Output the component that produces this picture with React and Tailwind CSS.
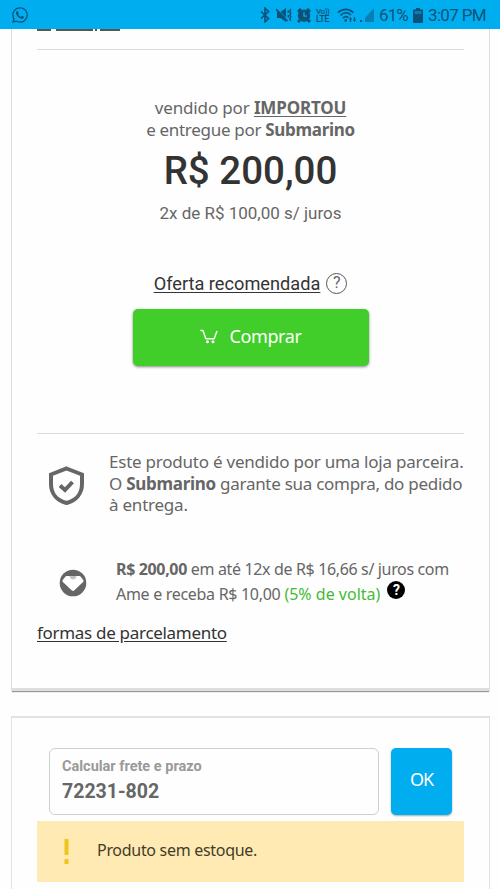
import React from "react";
import { FaWhatsapp } from "react-icons/fa";

function StatusBar() {
  return (
    <header className="flex h-[29px] shrink-0 items-center justify-between bg-[#00adef] pl-[11px] pr-[14px] text-[#0b5279]">
      <FaWhatsapp className="h-[18px] w-[18px]" />
      <div className="flex items-center pt-[1px]">
        <svg className="mr-[6px] h-[16px] w-[10px]" viewBox="0 0 10 16" fill="none" stroke="currentColor" strokeWidth="1.7">
          <path d="m1 4.500 7.500 7L5 14.800V1.200l3.500 3.300-7.500 7" />
        </svg>
        <svg className="mr-[5px] h-[14px] w-[16px]" viewBox="0 0 16 14">
          <path d="M1 4h3.500L10 0v14L4.500 10H1z" fill="currentColor" />
          <path d="M1 .5 11.500 11.500" stroke="#00adef" strokeWidth="1" />
          <path d="M0 1 11.500 13" stroke="currentColor" strokeWidth="1.600" />
          <path d="M12.300 2.500v2.500M12.300 7v2.500M14.800 1l-1 2 1 2-1 2 1 2-1 2 1 2" fill="none" stroke="currentColor" strokeWidth="1.500" />
        </svg>
        <svg className="mr-[5px] h-[15px] w-[14px]" viewBox="0 0 14 15">
          <path d="M1 4 4 1M13 4l-3-3M3 12l-2 2M11 12l2 2" stroke="currentColor" strokeWidth="3" />
          <circle cx="7" cy="7.700" r="6.200" fill="currentColor" />
          <path d="M7 4.300v3.800h3" fill="none" stroke="#00adef" strokeWidth="1.300" />
        </svg>
        <div className="mr-[6px] flex w-[15px] flex-col gap-[1px] font-['Roboto',sans-serif] font-medium leading-[7px]">
          <span className="h-[7px] whitespace-nowrap text-[8px] tracking-[-0.4px]">Vo))</span>
          <span className="h-[7px] whitespace-nowrap text-[9px] tracking-[-0.5px]">LTE</span>
        </div>
        <svg className="mr-[3px] h-[15px] w-[20px]" viewBox="0 0 20 15" fill="none" stroke="currentColor" strokeWidth="1.700">
          <path d="M1 4.700C5.500 .2 12 .2 16.500 4.700M3.500 7.400c3.200-3.200 7.500-3.200 10.500-.4M6 10c2-1.800 3.800-1.800 5.400-.4" />
          <circle cx="8.700" cy="12.400" r="1.300" fill="currentColor" stroke="none" />
          <path d="M13.500 14v-3M17.500 9v3" strokeWidth="1.200" />
          <path d="m11.800 11.500 1.700-2.500 1.700 2.500zM15.800 11.500l1.700 2.500 1.700-2.500z" fill="currentColor" stroke="none" />
        </svg>
        <svg className="mr-[5px] h-[14px] w-[14px]" viewBox="0 0 14 14">
          <path d="M14 0v14H5V10z" fill="#087fb2" />
          <path d="M0 12h2v2H0z" fill="currentColor" />
        </svg>
        <span className="mr-[6px] w-[28px] whitespace-nowrap font-['Roboto',sans-serif] text-[17px] leading-[20px] tracking-[-0.9px]">61%</span>
        <svg className="mr-[5px] h-[15px] w-[10px]" viewBox="0 0 10 15">
          <path d="M3 0h4v1.500h2q1 0 1 1V14q0 1-1 1H1q-1 0-1-1V2.500q0-1 1-1h2z" fill="currentColor" />
          <path d="M1.500 3h7v3h-7z" fill="#087fb2" />
        </svg>
        <span className="w-[58px] whitespace-nowrap font-['Roboto',sans-serif] text-[17px] leading-[20px] tracking-[-0.65px]">3:07 PM</span>
      </div>
    </header>
  );
}

function Cart() {
  return (
    <svg className="h-[16px] w-[18px]" viewBox="0 0 18 16" fill="none" stroke="white" strokeWidth="1.400" strokeLinecap="round" strokeLinejoin="round">
      <path d="M.8 2.500h2.200l2.800 8.200h8.400L16.800 3.500" />
      <circle cx="7.500" cy="13.700" r=".8" fill="white" />
      <circle cx="13" cy="13.700" r=".8" fill="white" />
    </svg>
  );
}

function Offer() {
  return (
    <section className="flex h-[662px] shrink-0 flex-col border-x border-b-[3px] border-[#dedede] px-[25px] shadow-[0_2px_1px_-1px_#999]">
      <div className="flex h-[2px] shrink-0">
        <span className="mr-[5px] h-[1.500px] w-[14px] bg-[#555]" />
        <span className="mr-[2px] h-[1.500px] w-[37px] bg-[#555]" />
        <span className="mr-[3px] h-[1.500px] w-[2px] bg-[#555]" />
        <span className="h-[1.500px] w-[20px] bg-[#555]" />
      </div>
      <hr className="mt-[18px] shrink-0 border-[#dcdcdc]" />
      <div className="mt-[47px] flex flex-col items-center whitespace-nowrap">
        <p className="h-[22px] text-[17px] leading-[22px] tracking-[-0.15px]">vendido por <b className="underline underline-offset-2">IMPORTOU</b></p>
        <p className="h-[22px] text-[17px] leading-[22px] tracking-[-0.3px]">e entregue por <b>Submarino</b></p>
        <p className="mt-[8px] h-[44px] font-['Roboto',sans-serif] text-[38.500px] font-medium leading-[44px] text-[#333]">R$ 200,00</p>
        <p className="mt-[9px] h-[22px] font-['Roboto',sans-serif] text-[17px] leading-[22px]">2x de R$ 100,00 s/ juros</p>
      </div>
      <div className="mt-[48px] flex h-[24px] shrink-0 items-center justify-center gap-[6px]">
        <a className="whitespace-nowrap font-['Roboto',sans-serif] text-[18.200px] leading-[24px] text-[#333] underline underline-offset-2">Oferta recomendada</a>
        <span className="mb-[2px] flex h-[21px] w-[21px] items-center justify-center rounded-full border border-[#555] font-['Roboto',sans-serif] text-[16px]">?</span>
      </div>
      <button className="mt-[13px] flex h-[57px] w-[236px] shrink-0 items-center justify-center gap-[12px] self-center rounded-[5px] bg-[#41cd2a] pb-[3px] text-[18px] text-white shadow-[0_1px_3px_#888]">
        <Cart />
        <span className="tracking-[-0.4px]">Comprar</span>
      </button>
      <hr className="mt-[67px] shrink-0 border-[#dcdcdc]" />
      <div className="mt-[17px] flex h-[66px] shrink-0 items-center">
        <svg className="ml-[12px] mr-[25px] mt-[2px] h-[39px] w-[35px] shrink-0" viewBox="0 0 35 39" fill="none" stroke="#666" strokeWidth="4">
          <path d="M17.500 2.500 33 8.500V18c0 9.500-6 16.500-15.500 19C8 34.500 2 27.500 2 18V8.500z" />
          <path d="m11 19.500 5 4.500 7.500-8" />
        </svg>
        <div className="mb-[1px] whitespace-nowrap text-[17px] leading-[21.700px] tracking-[-0.23px]">
          <p>Este produto é vendido por uma loja parceira.</p>
          <p className="tracking-[-0.28px]">O <b>Submarino</b> garante sua compra, do pedido</p>
          <p>à entrega.</p>
        </div>
      </div>
      <div className="mt-[40px] flex h-[49px] shrink-0">
        <svg className="ml-[22px] mr-[29px] mt-[12px] h-[28px] w-[28px] shrink-0" viewBox="0 0 28 28">
          <circle cx="14" cy="14" r="13.300" fill="#666" />
          <path d="M7.500 7h13q.8 0 1.200.7l2.600 3.400q.7 1-.2 1.800l-8.700 8.400q-1.400 1.200-2.800 0l-8.700-8.400q-.9-.8-.2-1.800l2.600-3.400q.4-.7 1.200-.7z" fill="white" />
          <path d="M10.500 7h7q-.8 3.500-3.500 3.500t-3.500-3.500z" fill="#c4c4c4" />
        </svg>
        <div className="whitespace-nowrap text-[16px] leading-[24.500px] tracking-[-0.35px]">
          <p><b>R$ 200,00</b> em até 12x de R$ 16,66 s/ juros com</p>
          <p className="flex">
            <span className="tracking-[-0.3px]">Ame e receba R$ 10,00 </span>
            <span className="ml-[4px] tracking-[0px] text-[#44ba35]">(5% de volta)</span>
            <span className="ml-[7px] mt-[-1px] flex h-[18px] w-[18px] items-center justify-center rounded-full bg-black font-['Roboto',sans-serif] text-[14px] font-bold leading-none text-white">?</span>
          </p>
        </div>
      </div>
      <a className="mt-[15px] whitespace-nowrap text-[17px] leading-[24px] tracking-[-0.3px] text-[#333] underline underline-offset-2">formas de parcelamento</a>
    </section>
  );
}

function Shipping() {
  return (
    <section className="mt-[25px] flex h-[200px] shrink-0 flex-col border border-t-2 border-[#e2e2e2] px-[25px] pt-[30px]">
      <div className="flex h-[67px] shrink-0 gap-[12px] px-[12px]">
        <label className="flex w-[331px] flex-col rounded-[6px] border-[1.500px] border-[#d0d0d0] pl-[12px] pt-[9px] font-['Roboto',sans-serif] font-bold">
          <span className="text-[14.500px] leading-[18px] text-[#999]">Calcular frete e prazo</span>
          <span className="mt-[4px] text-[19.500px] leading-[24px] text-[#666]">72231-802</span>
        </label>
        <button className="w-[61px] rounded-[5px] bg-[#00adef] pb-[5px] text-[18px] tracking-[-1px] text-white shadow-[0_1px_2px_#aaa]">OK</button>
      </div>
      <div className="mt-[6px] flex h-[61px] shrink-0 items-center bg-[#feeab2]">
        <svg className="ml-[27px] mr-[28px] h-[26px] w-[5px]" viewBox="0 0 5 26" fill="#efc51c">
          <path d="M.5 0h4v16h-4zM.5 20h4v5h-4z" />
        </svg>
        <span className="whitespace-nowrap pb-[4px] text-[16px] tracking-[-0.3px] text-[#443c28]">Produto sem estoque.</span>
      </div>
    </section>
  );
}

export default function App() {
  return (
    <div className="flex h-[889px] w-[500px] flex-col overflow-hidden bg-[#fefefe] font-['Noto_Sans',sans-serif] text-[#666]">
      <StatusBar />
      <main className="flex flex-col pl-[11px] pr-[10px]">
        <Offer />
        <Shipping />
      </main>
    </div>
  );
}
